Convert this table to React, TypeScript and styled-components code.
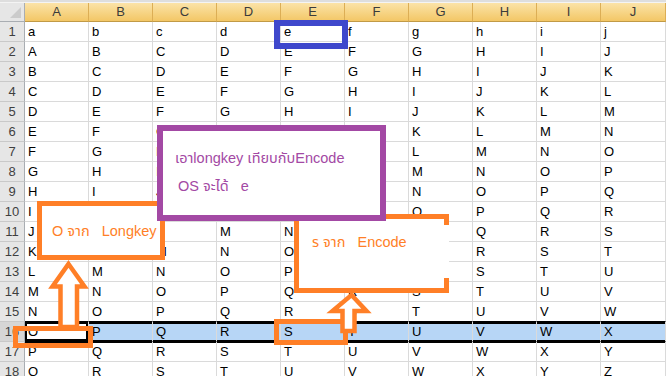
import React from 'react'
import styled, { createGlobalStyle } from 'styled-components'

const COLS = ['A', 'B', 'C', 'D', 'E', 'F', 'G', 'H', 'I', 'J']
const ROW_COUNT = 18
const BAND_ROW = 16

const ORANGE = '#ff7f27'
const PURPLE = '#a349a4'
const BLUE = '#3f48cc'

const NOTE_FONT = '"Liberation Sans", "Noto Sans Thai", Tahoma, Loma, Garuda, "DejaVu Sans", sans-serif'

// row 1 is the lower-case key row, the rest shift by one letter per row
const letterAt = (row: number, col: number) =>
  row === 1 ? String.fromCharCode(97 + col) : String.fromCharCode(65 + row - 2 + col)

const GlobalStyle = createGlobalStyle`
  html, body {
    margin: 0;
    padding: 0;
    background: #fff;
    overflow: hidden;
  }
`

const Sheet = styled.div`
  position: relative;
  width: 666px;
  height: 376px;
  overflow: hidden;
  background: #fff;
  font-family: "Liberation Sans", Arial, sans-serif;
`

const TopStrip = styled.div`
  height: 3px;
  box-sizing: border-box;
  background: #dedede;
  border-bottom: 1px solid #f4f4f4;
`

const Grid = styled.div`
  display: grid;
  grid-template-columns: 25px repeat(9, 64px) 65px;
  grid-template-rows: 19px;
  grid-auto-rows: 20px;
`

const Corner = styled.div`
  position: relative;
  box-sizing: border-box;
  background: #e6e6e6;
  border-right: 1px solid #a9adb2;
  border-bottom: 1px solid #a9adb2;
  &::after {
    content: '';
    position: absolute;
    right: 3px;
    bottom: 3px;
    border-left: 11px solid transparent;
    border-bottom: 11px solid #cbcbcb;
  }
`

const ColHead = styled.div`
  box-sizing: border-box;
  background: linear-gradient(#fbe3a8, #f3c766);
  border-right: 1px solid #dcae55;
  border-bottom: 1px solid #c19a46;
  color: #3b3b3b;
  font-size: 13px;
  line-height: 18px;
  text-align: center;
`

const RowHead = styled.div<{ $sel?: boolean }>`
  box-sizing: border-box;
  background: ${p => (p.$sel ? '#d6d6d6' : '#e6e6e6')};
  border-right: 1px solid #a9adb2;
  border-bottom: 1px solid #c9c9c9;
  color: #3f3f3f;
  font-size: 13px;
  line-height: 19px;
  text-align: center;
`

const Cell = styled.div<{ $band?: boolean; $active?: boolean; $above?: boolean; $below?: boolean }>`
  box-sizing: border-box;
  padding-left: 3px;
  border-right: 1px solid #dadada;
  border-bottom: 1px solid ${p => (p.$band || p.$above ? '#000' : '#dadada')};
  background: ${p => (p.$band && !p.$active ? '#b7d6f6' : '#fff')};
  color: #000;
  font-size: 13px;
  line-height: 19px;
  white-space: nowrap;
  overflow: hidden;
  box-shadow: ${p =>
    p.$active
      ? 'inset 2px 2px 0 #000, inset -2px -2px 0 #000'
      : p.$band
        ? 'inset 0 2px 0 #000, inset 0 -1px 0 #000'
        : p.$below
          ? 'inset 0 1px 0 #000'
          : 'none'};
`

type BoxProps = { $x: number; $y: number; $w: number; $h: number; $color: string; $t: number }

const Frame = styled.div<BoxProps>`
  position: absolute;
  left: ${p => p.$x}px;
  top: ${p => p.$y}px;
  width: ${p => p.$w}px;
  height: ${p => p.$h}px;
  box-sizing: border-box;
  border: ${p => p.$t}px solid ${p => p.$color};
`

const Callout = styled(Frame)<{ $pad: string }>`
  background: #fff;
  padding: ${p => p.$pad};
  color: ${p => p.$color};
  font-family: ${NOTE_FONT};
  font-size: 14.5px;
  line-height: 20px;
  white-space: pre;
  display: flex;
  flex-direction: column;
  gap: 8px;
`

// the hand-drawn box on the right has a gap in its right side
const OpenCallout = styled(Callout)`
  &::after {
    content: '';
    position: absolute;
    right: -${p => p.$t}px;
    top: 6px;
    bottom: 10px;
    width: ${p => p.$t}px;
    background: #fff;
  }
`

const Indent = styled.span`
  padding-left: 3px;
`

const Arrows = styled.svg`
  position: absolute;
  left: 0;
  top: 0;
  pointer-events: none;
`

const App: React.FC = () => {
  const rows = Array.from({ length: ROW_COUNT }, (_, i) => i + 1)

  return (
    <Sheet>
      <GlobalStyle />
      <TopStrip />
      <Grid>
        <Corner />
        {COLS.map(c => (
          <ColHead key={c}>{c}</ColHead>
        ))}
        {rows.map(r => (
          <React.Fragment key={r}>
            <RowHead $sel={r === BAND_ROW}>{r}</RowHead>
            {COLS.map((c, ci) => (
              <Cell
                key={c}
                $band={r === BAND_ROW}
                $active={r === BAND_ROW && ci === 0}
                $above={r === BAND_ROW - 1}
                $below={r === BAND_ROW + 1}
              >
                {letterAt(r, ci)}
              </Cell>
            ))}
          </React.Fragment>
        ))}
      </Grid>

      <Frame $x={274} $y={20} $w={74} $h={29} $t={6} $color={BLUE} />

      <Callout $x={37} $y={201} $w={128} $h={59} $t={5} $color={ORANGE} $pad="15px 0 0 10px">
        <span>{'O จาก   Longkey'}</span>
      </Callout>

      <OpenCallout $x={294} $y={214} $w={155} $h={79} $t={5} $color={ORANGE} $pad="13px 0 0 13px">
        <span>{'ร จาก   Encode'}</span>
      </OpenCallout>

      <Callout $x={157} $y={125} $w={229} $h={96} $t={6} $color={PURPLE} $pad="17px 0 0 12px">
        <span>เอาlongkey เทียบกับEncode</span>
        <Indent>{'OS จะได้   e'}</Indent>
      </Callout>

      <Frame $x={13} $y={326} $w={80} $h={22} $t={5} $color={ORANGE} />
      <Frame $x={274} $y={319} $w={74} $h={26} $t={5} $color={ORANGE} />

      <Arrows width={666} height={376} viewBox="0 0 666 376">
        <polygon
          points="68.5,264 84.5,286.5 77,286.5 77,327 60.5,327 60.5,286.5 52.5,286.5"
          fill="#fff"
          stroke={ORANGE}
          strokeWidth={4.5}
        />
        <polygon
          points="351.5,295 366.5,311 354.5,311 354.5,331 342.5,331 342.5,311 332.5,311"
          fill="#fff"
          stroke={ORANGE}
          strokeWidth={4.5}
        />
      </Arrows>
    </Sheet>
  )
}

export default App
